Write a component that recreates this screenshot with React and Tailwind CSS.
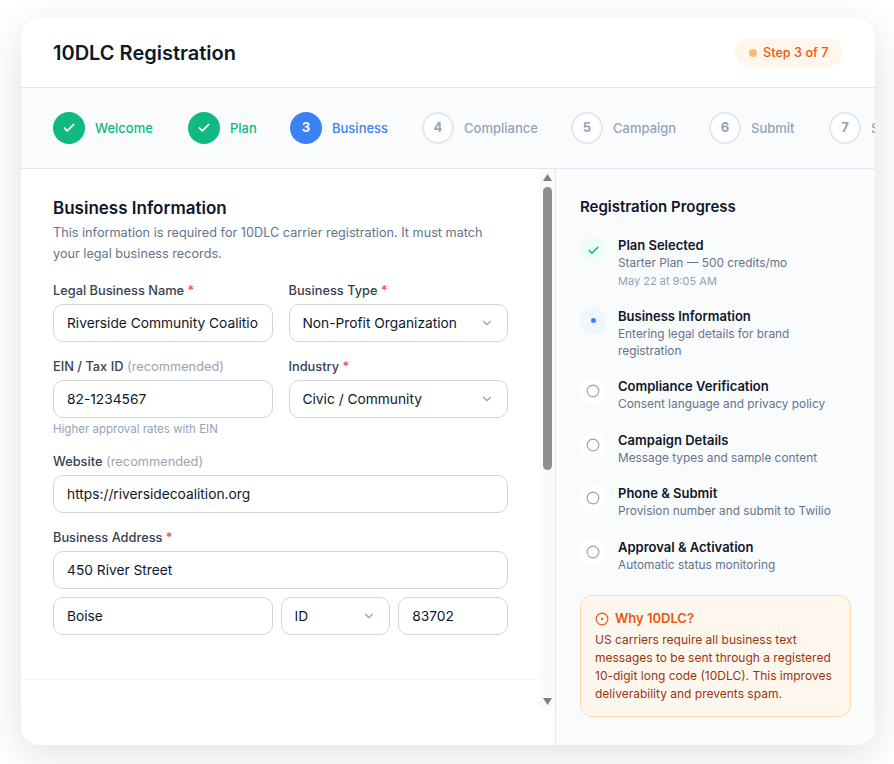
import { Check, ChevronDown, Circle, CircleDot } from "lucide-react";

const steps = [
  { n: 1, label: "Welcome", w: "w-[59px]", state: "done" },
  { n: 2, label: "Plan", w: "w-[26px]", state: "done" },
  { n: 3, label: "Business", w: "w-[56px]", state: "active" },
  { n: 4, label: "Compliance", w: "w-[73px]" },
  { n: 5, label: "Campaign", w: "w-[62px]" },
  { n: 6, label: "Submit", w: "w-[44px]" },
  { n: 7, label: "Status", w: "w-[44px]" },
];

const progress = [
  { title: "Plan Selected", sub: "Starter Plan — 500 credits/mo", time: "May 22 at 9:05 AM", state: "done" },
  { title: "Business Information", sub: "Entering legal details for brand registration", state: "active" },
  { title: "Compliance Verification", sub: "Consent language and privacy policy" },
  { title: "Campaign Details", sub: "Message types and sample content" },
  { title: "Phone & Submit", sub: "Provision number and submit to Twilio" },
  { title: "Approval & Activation", sub: "Automatic status monitoring" },
];

function Step({ step }) {
  return (
    <div className="flex shrink-0 items-center gap-2.5">
      {step.state === "done" && (
        <div className="flex h-8 w-8 items-center justify-center rounded-full bg-[#10b981] text-white">
          <Check size={14} strokeWidth={3} />
        </div>
      )}
      {step.state === "active" && (
        <div className="flex h-8 w-8 items-center justify-center rounded-full bg-[#3b82f6] text-[13px] font-bold text-white">
          {step.n}
        </div>
      )}
      {!step.state && (
        <div className="flex h-8 w-8 items-center justify-center rounded-full border-2 border-[#e2e8f0] bg-white text-[13px] font-bold text-[#94a3b8]">
          {step.n}
        </div>
      )}
      <span
        className={`mt-[2px] text-[13px] font-medium whitespace-nowrap ${step.w} ${
          step.state === "done" ? "text-[#10b981]" : step.state === "active" ? "text-[#3b82f6]" : "text-[#94a3b8]"
        }`}
      >
        {step.label}
      </span>
    </div>
  );
}

function Label({ text, required, note }) {
  return (
    <label className="mb-[5px] block text-[12.8px] leading-[17px] font-medium text-[#374151]">
      {text}
      {required && <span className="text-[#ef4444]"> *</span>}
      {note && <span className="font-normal text-[#9ca3af]"> ({note})</span>}
    </label>
  );
}

function TextInput({ value }) {
  return (
    <input
      readOnly
      value={value}
      className="h-[38px] w-full rounded-[10px] border-[1.5px] border-[#d1d5db] bg-white px-[13px] text-[13.75px] text-[#0f172a] outline-none"
    />
  );
}

function Select({ value }) {
  return (
    <div className="relative">
      <select
        value={value}
        onChange={() => {}}
        className="h-[38px] w-full appearance-none rounded-[10px] border-[1.5px] border-[#d1d5db] bg-white px-[13px] text-[13.75px] text-[#0f172a] outline-none"
      >
        <option>{value}</option>
      </select>
      <ChevronDown size={14} className="pointer-events-none absolute top-[12px] right-[14px] text-[#94a3b8]" />
    </div>
  );
}

function ProgressIcon({ state }) {
  if (state === "done") {
    return (
      <div className="flex h-[26px] w-[26px] shrink-0 items-center justify-center rounded-full bg-[#ecfdf5] text-[#10b981]">
        <Check size={13} strokeWidth={3} />
      </div>
    );
  }
  if (state === "active") {
    return (
      <div className="flex h-[26px] w-[26px] shrink-0 items-center justify-center rounded-full bg-[#eff6ff]">
        <div className="h-[5px] w-[5px] rounded-full bg-[#3b82f6]" />
      </div>
    );
  }
  return (
    <div className="flex h-[26px] w-[26px] shrink-0 items-center justify-center rounded-full bg-white text-[#94a3b8]">
      <Circle size={14} strokeWidth={2} />
    </div>
  );
}

// headless browser hides native scrollbars, so this one is drawn
function ScrollBar() {
  return (
    <div className="flex h-full w-[15px] shrink-0 flex-col items-center bg-[#fafafa] pt-[5px] pb-[3px]">
      <svg width="9" height="7" viewBox="0 0 9 7" className="text-[#808080]">
        <path d="M4.5 0 L9 7 L0 7 Z" fill="currentColor" />
      </svg>
      <div className="mt-[6px] h-[283px] w-[9px] rounded-full bg-[#8f8f8f]" />
      <svg width="9" height="7" viewBox="0 0 9 7" className="mt-auto text-[#808080]">
        <path d="M0 0 L9 0 L4.5 7 Z" fill="currentColor" />
      </svg>
    </div>
  );
}

export default function App() {
  return (
    <div className="h-screen overflow-hidden bg-white pt-[18px] pl-[21px] font-['Inter',sans-serif]">
      <div className="flex h-[727px] w-[854px] flex-col overflow-hidden rounded-[18px] bg-white shadow-[0_10px_40px_rgba(0,0,0,0.12)]">
        {/* Header */}
        <div className="flex h-[70px] shrink-0 items-center justify-between border-b border-[#e2e8f0] px-8">
          <h1 className="text-[20px] font-semibold text-[#0f172a]">10DLC Registration</h1>
          <div className="flex h-[29px] w-[108px] items-center gap-1.5 rounded-full bg-[#fff7ed] px-3.5 text-[12.7px] font-medium whitespace-nowrap text-[#ea580c]">
            <span className="h-2 w-2 shrink-0 rounded-full bg-[#fdba74]" />
            Step 3 of 7
          </div>
        </div>

        {/* Stepper */}
        <div className="flex h-[81px] shrink-0 items-center gap-[34px] overflow-hidden border-b border-[#e2e8f0] bg-[#fafbfd] px-8">
          {steps.map((s) => (
            <Step key={s.n} step={s} />
          ))}
        </div>

        <div className="flex min-h-0 flex-1">
          {/* Form */}
          <div className="w-[535px] shrink-0 border-r border-[#e2e8f0]">
            <div className="flex h-[539px]">
              <div className="h-full min-w-0 flex-1 overflow-y-auto">
                <div className="h-[510px] px-8 pt-[28px]">
                  <h2 className="text-[17px] leading-[22px] font-semibold text-[#0f172a]">Business Information</h2>
                  <p className="mt-[3px] mb-[18px] text-[12.7px] leading-[21px] text-[#64748b]">
                    This information is required for 10DLC carrier registration. It must match your legal business records.
                  </p>
                  <div className="grid grid-cols-2 gap-x-4 gap-y-4">
                    <div>
                      <Label text="Legal Business Name" required />
                      <TextInput value="Riverside Community Coalition" />
                    </div>
                    <div>
                      <Label text="Business Type" required />
                      <Select value="Non-Profit Organization" />
                    </div>
                    <div>
                      <Label text="EIN / Tax ID" note="recommended" />
                      <TextInput value="82-1234567" />
                      <div className="mt-[3px] text-[11.5px] leading-4 text-[#94a3b8]">Higher approval rates with EIN</div>
                    </div>
                    <div>
                      <Label text="Industry" required />
                      <Select value="Civic / Community" />
                    </div>
                    <div className="col-span-2">
                      <Label text="Website" note="recommended" />
                      <TextInput value="https://riversidecoalition.org" />
                    </div>
                    <div className="col-span-2">
                      <Label text="Business Address" required />
                      <TextInput value="450 River Street" />
                      <div className="mt-2 grid grid-cols-[2fr_1fr_1fr] gap-2">
                        <TextInput value="Boise" />
                        <Select value="ID" />
                        <TextInput value="83702" />
                      </div>
                    </div>
                  </div>
                </div>
                <div className="h-[29px] border-t border-[#f1f5f9]" />
              </div>
              <ScrollBar />
            </div>
          </div>

          {/* Progress panel */}
          <div className="flex-1 bg-[#fafbfd] px-6 pt-[28px]">
            <h3 className="text-[15px] leading-5 font-semibold text-[#0f172a]">Registration Progress</h3>
            <div className="mt-[20px] flex flex-col gap-[18.5px]">
              {progress.map((p) => (
                <div key={p.title} className="flex gap-3">
                  <ProgressIcon state={p.state} />
                  <div className="min-w-0 flex-1">
                    <div className="text-[13px] leading-[17px] font-semibold text-[#0f172a]">{p.title}</div>
                    <div className="mt-px text-[11.85px] leading-[17px] text-[#64748b]">{p.sub}</div>
                    {p.time && <div className="mt-px text-[11px] leading-4 text-[#94a3b8]">{p.time}</div>}
                  </div>
                </div>
              ))}
            </div>
            <div className="mt-[21.5px] rounded-[12px] border border-[#fed7aa] bg-[#fff7ed] px-[14px] py-[13px]">
              <div className="flex items-center gap-1.5 text-[13px] font-semibold text-[#ea580c]">
                <CircleDot size={14} />
                Why 10DLC?
              </div>
              <p className="mt-[2px] text-[12px] leading-[18px] text-[#9a3412]">
                US carriers require all business text messages to be sent through a registered 10-digit long code (10DLC). This improves deliverability and prevents spam.
              </p>
            </div>
          </div>
        </div>
      </div>
    </div>
  );
}
